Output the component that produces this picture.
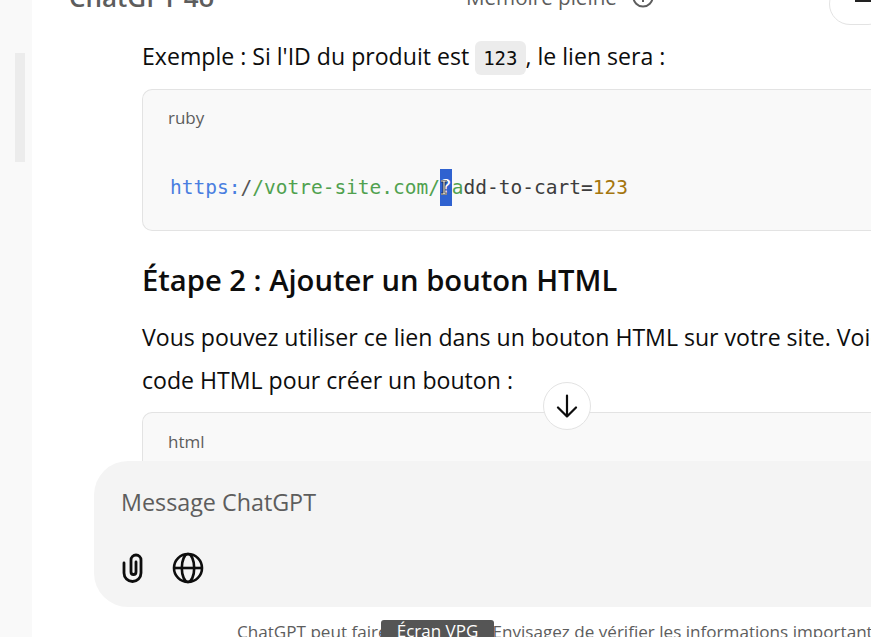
<div class="app">
  <aside class="rail"><div class="thumb"></div></aside>
  <main class="main">
    <header class="top">
      <div class="model">ChatGPT 4o <svg class="caret" width="14" height="14" viewBox="0 0 14 14"><path d="M2.5 4.5L7 9l4.5-4.5" fill="none" stroke="#b4b4b4" stroke-width="2.4" stroke-linecap="round"/></svg></div>
      <div class="memory">Mémoire pleine
        <svg width="22" height="22" viewBox="0 0 22 22"><circle cx="11" cy="11" r="9.6" fill="none" stroke="#5d5d5d" stroke-width="2"/><path d="M11 10v6M11 5.8v1.6" stroke="#5d5d5d" stroke-width="2"/></svg>
      </div>
      <div class="share"><svg width="24" height="20" viewBox="0 0 24 20"><path d="M2 4v9h20V4" fill="none" stroke="#222" stroke-width="2"/></svg></div>
    </header>
    <article class="thread">
      <p class="first">Exemple : Si l'ID du produit est <code class="inline">123</code>, le lien sera :</p>
      <div class="block">
        <div class="lang">ruby</div>
        <pre class="code"><span class="blue">https:</span><span class="slash">/</span><span class="green">/votre-site.com/</span><span class="sel">?<svg class="ibeam" width="8" height="15" viewBox="0 0 8 15"><path d="M1 1h6M4 1v13M1 14h6" fill="none" stroke="#111" stroke-width="2.6"/><path d="M1 1h6M4 1v13M1 14h6" fill="none" stroke="#fff" stroke-width="1.1"/></svg></span><span class="green">a</span>dd-to-cart=<span class="num">123</span></pre>
      </div>
      <h3>Étape 2 : Ajouter un bouton HTML</h3>
      <p class="para">Vous pouvez utiliser ce lien dans un bouton HTML sur votre site. Voici un exemple de<br />code HTML pour créer un bouton :</p>
      <div class="block second">
        <div class="lang">html</div>
      </div>
    </article>

    <button class="down" aria-label="Défiler vers le bas">
      <svg width="24" height="24" viewBox="0 0 24 24"><path d="M12 1.5v21M3 13.5l9 9 9-9" fill="none" stroke="#0d0d0d" stroke-width="2.2" stroke-linecap="round" stroke-linejoin="round"/></svg>
    </button>

    <div class="composer">
      <div class="placeholder">Message ChatGPT</div>
      <div class="tools">
        <svg width="21" height="30" viewBox="0 0 21 30"><path d="M2 10V20a8.5 8.5 0 0 0 17 0V7a5 5 0 0 0-10 0V19a2.5 2.5 0 0 0 5 0V9" fill="none" stroke="#0d0d0d" stroke-width="2.8" stroke-linecap="round"/></svg>
        <svg width="32" height="32" viewBox="0 0 32 32"><g fill="none" stroke="#0d0d0d" stroke-width="2.6"><circle cx="16" cy="16" r="14"/><ellipse cx="16" cy="16" rx="6.2" ry="14"/><path d="M2 16h28"/></g></svg>
      </div>
    </div>
    <footer class="note">ChatGPT peut faire des erreurs. Envisagez de vérifier les informations importantes.</footer>
    <div class="tip">Écran VPG</div>
  </main>
</div>

<style>
  :global(body) { margin: 0; background: #fff; }
  .app {
    display: flex;
    width: 871px;
    height: 637px;
    overflow: hidden;
    font-family: "Open Sans", "Noto Sans", sans-serif;
    color: #0d0d0d;
  }
  .rail {
    flex: 0 0 32px;
    background: #f9f9f9;
    padding: 53px 0 0 15px;
    box-sizing: border-box;
  }
  .thumb { width: 10px; height: 109px; background: #ececec; }
  .main { flex: 1; position: relative; min-width: 0; overflow: hidden; }
  .top {
    display: flex;
    align-items: flex-end;
    height: 26px;
    margin-top: -16px;
    padding-left: 37px;
    width: 900px;
  }
  .model { font-size: 26px; font-weight: 600; color: #5d5d5d; line-height: 26px; white-space: nowrap; width: 397px; flex: none; }
  .caret { margin-left: 10px; vertical-align: 9px; }
  .memory { font-size: 20.6px; font-weight: 500; line-height: 26px; color: #5d5d5d; white-space: nowrap; display: flex; align-items: center; gap: 15px; width: 363px; flex: none; }
  .share { width: 60px; height: 42px; margin-bottom: -15px; box-sizing: border-box; border: 1px solid #e3e3e3; border-radius: 22px; padding: 4px 0 0 24px; flex: none; }
  .thread { padding-left: 110px; width: 880px; box-sizing: border-box; line-height: 43px; }
  p { margin: 0; }
  .first { font-size: 23.1px; margin-top: 25px; white-space: nowrap; line-height: 43px; }
  .inline {
    font-family: "DejaVu Sans Mono", monospace;
    font-size: 19px;
    background: #ececec;
    border-radius: 6px;
    padding: 6px 8px;
  }
  .block {
    border: 1px solid #e3e3e3;
    border-radius: 10px 0 0 10px;
    border-right: 0;
    background: #f9f9f9;
    height: 142px;
    box-sizing: border-box;
    margin-top: 9px;
    padding: 14px 0 0 25px;
  }
  .lang { font-size: 17px; line-height: 27px; color: #5d5d5d; }
  .code {
    margin: 43px 0 0 2px;
    font-family: "DejaVu Sans Mono", monospace;
    font-size: 19.5px;
    line-height: 27px;
    color: #3d3d3d;
  }
  .blue { color: #4a7ee0; }
  .slash { color: #555; }
  .green { color: #50a14f; }
  .num { color: #a5760f; }
  .sel { position: relative; background: #2f62d0; color: #fff; display: inline-block; height: 37px; line-height: 35px; vertical-align: top; margin-top: -5px; }
  .ibeam { position: absolute; left: 0; top: 11px; }
  h3 { margin: 25px 0 0; font-size: 29.2px; line-height: 48px; font-weight: 600; }
  .para { font-size: 23.1px; margin-top: 12px; white-space: nowrap; }
  .second { margin-top: 10px; height: 120px; padding-top: 15px; }
  .down {
    position: absolute;
    left: 511px;
    top: 382px;
    width: 48px;
    height: 48px;
    border-radius: 50%;
    background: #fff;
    border: 1px solid #e3e3e3;
    padding: 0;
    display: flex;
    align-items: center;
    justify-content: center;
  }
  .composer {
    position: absolute;
    left: 62px;
    top: 461px;
    width: 850px;
    height: 146px;
    background: #f4f4f4;
    border-radius: 34px;
    box-sizing: border-box;
    padding: 24px 0 0 27px;
  }
  .placeholder { font-size: 23.3px; line-height: 34px; color: #5d5d5d; }
  .tools { display: flex; align-items: center; gap: 29px; margin-top: 33px; margin-left: 1px; }
  .note {
    position: absolute;
    left: 205px;
    top: 621px;
    font-size: 17.1px;
    line-height: 22px;
    color: #5d5d5d;
    white-space: nowrap;
  }
  .tip {
    position: absolute;
    left: 349px;
    top: 620px;
    width: 113px;
    height: 20px;
    background: #555;
    border-radius: 3px 3px 0 0;
    color: #fff;
    font-size: 17px;
    line-height: 22px;
    text-align: center;
  }
</style>
